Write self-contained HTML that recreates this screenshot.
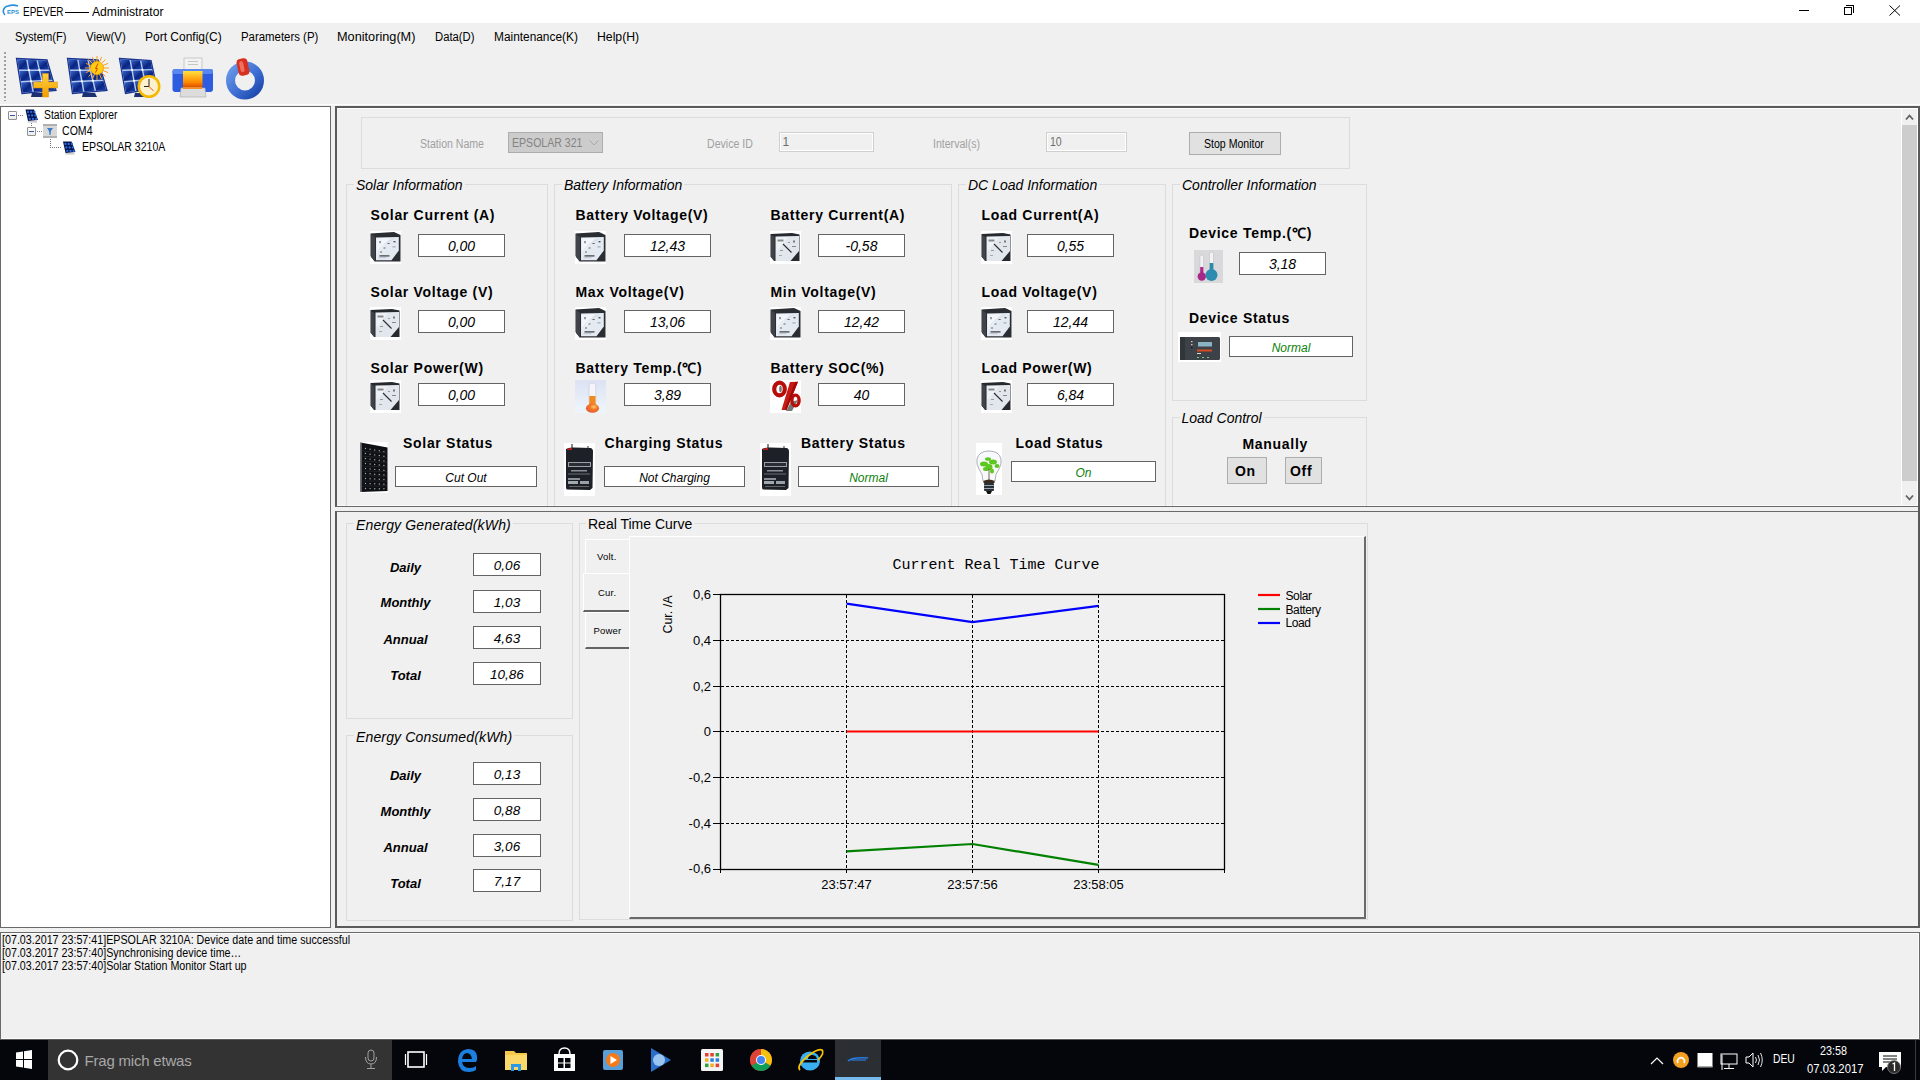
<!DOCTYPE html>
<html><head><meta charset="utf-8">
<style>
*{box-sizing:border-box;margin:0;padding:0}
html,body{width:1920px;height:1080px;overflow:hidden;background:#f0f0f0;font-family:"Liberation Sans",sans-serif;color:#000}
.a{position:absolute}
.t{position:absolute;white-space:nowrap;line-height:1}
.gb{position:absolute;border:1px solid #dcdcdc}
.vb{position:absolute;background:#fff;border:1px solid #646464;font-style:italic;font-size:13.4px;text-align:center;white-space:nowrap}
.lb{position:absolute;white-space:nowrap;line-height:1;font-weight:bold;font-size:14px;letter-spacing:0.7px}
.gt{position:absolute;white-space:nowrap;line-height:1;font-style:italic;font-size:14px;background:#f0f0f0;padding:0 2px}
</style></head><body>

<svg width="0" height="0" style="position:absolute">
<defs>
<symbol id="gA" viewBox="0 0 31 33">
<rect width="31" height="33" fill="#fff"/>
<polygon points="0.5,2.5 24,1 30.5,4 30.5,30.5 4.5,30.5 0.5,25" fill="#2a2d32"/>
<polygon points="1,3 5,6 5,30 1,26" fill="#40444a"/>
<polygon points="6,6.5 28.8,6 28.8,19.5 21.5,29.2 6,29.2" fill="#e4eaf2"/>
<polygon points="7,7.5 20,7 10,20 7,22" fill="#f2f5fa"/>
<rect x="9.5" y="24.3" width="10" height="1.2" fill="#3a3a3a"/>
<rect x="8.5" y="26.5" width="8" height="0.6" fill="#aab"/>
<rect x="9.5" y="10" width="1" height="2.2" fill="#444"/>
<rect x="17.5" y="12" width="2.2" height="1" fill="#666"/>
<rect x="23.5" y="10" width="2" height="1.4" fill="#555"/>
<rect x="13.5" y="16.5" width="2" height="1" fill="#666"/>
<rect x="10" y="20.5" width="2" height="1" fill="#666"/>
<rect x="22.5" y="15.5" width="3" height="0.8" fill="#888"/>
<path d="M8 21 Q12 12 24 8" stroke="#c8ccd4" stroke-width="0.5" fill="none"/>
</symbol>
<symbol id="gV" viewBox="0 0 31 33">
<rect width="31" height="33" fill="#fff"/>
<polygon points="0.5,3 22,2 29.5,3.5 29.5,30 4,30 0.5,25.5" fill="#26292d"/>
<polygon points="1,4 4.5,6 4.5,30 1,26" fill="#40444a"/>
<polygon points="5.5,5.5 29,5 29,20 20.5,30 5.5,30" fill="#e2e7ee"/>
<polygon points="6.5,6.5 18,6 9,18 6.5,20" fill="#eef2f7"/>
<line x1="13" y1="13" x2="21.5" y2="21.5" stroke="#2a2a2a" stroke-width="1.1"/>
<rect x="7.5" y="8.5" width="6" height="2" fill="#8a8a8a"/>
<rect x="23" y="9.5" width="2" height="2" fill="#777"/>
<rect x="22" y="15" width="4" height="1" fill="#888"/>
<rect x="10" y="19" width="3" height="1" fill="#999"/>
<rect x="18" y="11" width="2" height="1" fill="#999"/>
<rect x="9" y="24" width="3" height="1" fill="#aaa"/>
</symbol>
<symbol id="therm" viewBox="0 0 31 33">
<defs><linearGradient id="tbg" x1="0" y1="0" x2="0" y2="1"><stop offset="0" stop-color="#dce2f3"/><stop offset="1" stop-color="#eef6fc"/></linearGradient>
<radialGradient id="tbulb" cx="0.6" cy="0.35" r="0.7"><stop offset="0" stop-color="#ffd070"/><stop offset="0.4" stop-color="#f5782a"/><stop offset="1" stop-color="#e05a30"/></radialGradient></defs>
<rect width="31" height="33" fill="url(#tbg)"/>
<rect x="14" y="3" width="6.8" height="22" rx="3" fill="#f4f4fa" stroke="#c8c8d4" stroke-width="0.6"/>
<rect x="14.3" y="16" width="6.2" height="10" fill="#f08a20"/>
<ellipse cx="17.5" cy="28.2" rx="6.6" ry="4.6" fill="url(#tbulb)"/>
</symbol>
<symbol id="pct" viewBox="0 0 31 33">
<rect width="31" height="33" fill="#fff"/>
<path d="M21 22 L28 20 L22 31 L16 31 Z" fill="#555" opacity="0.8"/>
<ellipse cx="9.5" cy="9" rx="5.3" ry="6.3" fill="none" stroke="#b80e0a" stroke-width="4.2"/>
<ellipse cx="10.5" cy="9" rx="1.3" ry="3.2" fill="#777"/>
<ellipse cx="25.5" cy="20.5" rx="3.6" ry="5.4" fill="none" stroke="#b80e0a" stroke-width="3.4"/>
<polygon points="20,2 28,1.8 16.5,30 11.5,30" fill="#c81a14"/>
<polygon points="25,2 28,1.8 16.5,30 14.5,30" fill="#a00c08"/>
</symbol>
<symbol id="batt" viewBox="0 0 31 53">
<rect width="31" height="53" fill="#fff"/>
<rect x="7" y="1" width="2" height="5" fill="#8a8a8a"/>
<rect x="23" y="3" width="2" height="3" fill="#999"/>
<path d="M2 6 Q5 4 10 4.5 L27 5 Q29 6 29 8 L28.5 45 L26 47 L3 46.5 Q2 46 2 44 Z" fill="#1d2026"/>
<path d="M3 6 Q5 4.5 8 5 L8 7 L3 7Z" fill="#b02020"/>
<rect x="4" y="19" width="23" height="5" fill="#9aa0a8"/>
<rect x="5" y="20" width="21" height="3" fill="#2a2d33"/>
<rect x="7" y="27" width="16" height="1.5" fill="#8a9098"/>
<rect x="4" y="30.5" width="22" height="1" fill="#6a7078"/>
<rect x="4" y="35" width="12" height="2" fill="#8a9098"/>
<rect x="4" y="38" width="10" height="3" fill="#a0a8b0"/>
<rect x="16" y="38" width="9" height="3" fill="#9aa0a8"/>
<rect x="5" y="43" width="20" height="0.8" fill="#777"/>
</symbol>
<symbol id="panel" viewBox="0 0 28 51">
<rect width="28" height="51" fill="#fff"/>
<polygon points="0.5,0.5 27.5,5.5 27.5,49 0.5,50" fill="#0e1014"/>
<polygon points="0.5,0.5 2,1 2,50 0.5,50" fill="#5a5c60"/>
<g stroke="#3a3c42" stroke-width="0.4">
<line x1="1" y1="9" x2="27" y2="11"/><line x1="1" y1="14" x2="27" y2="16"/><line x1="1" y1="19" x2="27" y2="20.5"/><line x1="1" y1="24" x2="27" y2="25"/><line x1="1" y1="29" x2="27" y2="29.5"/><line x1="1" y1="34" x2="27" y2="34"/><line x1="1" y1="39" x2="27" y2="39"/><line x1="1" y1="44" x2="27" y2="44"/>
</g>
<circle cx="5.5" cy="6.5" r="0.7" fill="#a8aab0"/><circle cx="10.1" cy="7.3" r="0.7" fill="#a8aab0"/><circle cx="14.7" cy="8.0" r="0.7" fill="#a8aab0"/><circle cx="19.3" cy="8.8" r="0.7" fill="#a8aab0"/><circle cx="23.9" cy="9.6" r="0.7" fill="#a8aab0"/><circle cx="5.5" cy="11.5" r="0.7" fill="#a8aab0"/><circle cx="10.1" cy="12.2" r="0.7" fill="#a8aab0"/><circle cx="14.7" cy="12.9" r="0.7" fill="#a8aab0"/><circle cx="19.3" cy="13.5" r="0.7" fill="#a8aab0"/><circle cx="23.9" cy="14.2" r="0.7" fill="#a8aab0"/><circle cx="5.5" cy="16.5" r="0.7" fill="#a8aab0"/><circle cx="10.1" cy="17.1" r="0.7" fill="#a8aab0"/><circle cx="14.7" cy="17.7" r="0.7" fill="#a8aab0"/><circle cx="19.3" cy="18.3" r="0.7" fill="#a8aab0"/><circle cx="23.9" cy="18.9" r="0.7" fill="#a8aab0"/><circle cx="5.5" cy="21.5" r="0.7" fill="#a8aab0"/><circle cx="10.1" cy="22.0" r="0.7" fill="#a8aab0"/><circle cx="14.7" cy="22.5" r="0.7" fill="#a8aab0"/><circle cx="19.3" cy="23.0" r="0.7" fill="#a8aab0"/><circle cx="23.9" cy="23.5" r="0.7" fill="#a8aab0"/><circle cx="5.5" cy="26.5" r="0.7" fill="#a8aab0"/><circle cx="10.1" cy="26.9" r="0.7" fill="#a8aab0"/><circle cx="14.7" cy="27.4" r="0.7" fill="#a8aab0"/><circle cx="19.3" cy="27.8" r="0.7" fill="#a8aab0"/><circle cx="23.9" cy="28.2" r="0.7" fill="#a8aab0"/><circle cx="5.5" cy="31.5" r="0.7" fill="#a8aab0"/><circle cx="10.1" cy="31.8" r="0.7" fill="#a8aab0"/><circle cx="14.7" cy="32.2" r="0.7" fill="#a8aab0"/><circle cx="19.3" cy="32.5" r="0.7" fill="#a8aab0"/><circle cx="23.9" cy="32.9" r="0.7" fill="#a8aab0"/><circle cx="5.5" cy="36.5" r="0.7" fill="#a8aab0"/><circle cx="10.1" cy="36.8" r="0.7" fill="#a8aab0"/><circle cx="14.7" cy="37.0" r="0.7" fill="#a8aab0"/><circle cx="19.3" cy="37.3" r="0.7" fill="#a8aab0"/><circle cx="23.9" cy="37.5" r="0.7" fill="#a8aab0"/><circle cx="5.5" cy="41.5" r="0.7" fill="#a8aab0"/><circle cx="10.1" cy="41.7" r="0.7" fill="#a8aab0"/><circle cx="14.7" cy="41.8" r="0.7" fill="#a8aab0"/><circle cx="19.3" cy="42.0" r="0.7" fill="#a8aab0"/><circle cx="23.9" cy="42.2" r="0.7" fill="#a8aab0"/><circle cx="5.5" cy="46.5" r="0.7" fill="#a8aab0"/><circle cx="10.1" cy="46.6" r="0.7" fill="#a8aab0"/><circle cx="14.7" cy="46.7" r="0.7" fill="#a8aab0"/><circle cx="19.3" cy="46.8" r="0.7" fill="#a8aab0"/><circle cx="23.9" cy="46.8" r="0.7" fill="#a8aab0"/>
</symbol>
<symbol id="bulb" viewBox="0 0 26 52">
<rect width="26" height="52" fill="#fff"/>
<path d="M7 38 Q7 31 3 26 Q0 21 1 16 Q3 8 13 8 Q23 8 25 16 Q26 21 23 26 Q19 31 19 38 Z" fill="#f8f9fc" stroke="#8c8c98" stroke-width="0.7"/>
<g fill="#5cc81e">
<ellipse cx="8" cy="21" rx="4" ry="2.5"/><ellipse cx="17" cy="19" rx="4" ry="2.5"/><ellipse cx="13" cy="24" rx="3.5" ry="3"/><ellipse cx="21" cy="23" rx="2.5" ry="2"/><ellipse cx="10" cy="26" rx="3" ry="2"/><ellipse cx="16" cy="28" rx="2" ry="2.5"/><ellipse cx="12" cy="16" rx="3" ry="1.8"/>
</g>
<line x1="13" y1="26" x2="13" y2="37" stroke="#5a4020" stroke-width="0.8"/>
<path d="M7.5 38 Q13 35 18.5 38 L18.5 40 L7.5 40Z" fill="#3a2a1a"/>
<rect x="8" y="40" width="10" height="8" rx="1" fill="#2a3038"/>
<rect x="8" y="42" width="10" height="1" fill="#9aa4b0"/>
<rect x="8" y="45" width="10" height="1" fill="#9aa4b0"/>
<path d="M10 48 L16 48 L14.5 51 L11.5 51Z" fill="#111"/>
</symbol>
<symbol id="dtemp" viewBox="0 0 29 33">
<rect width="29" height="33" fill="#d9d9dc"/>
<rect x="6" y="5" width="3.5" height="20" rx="1.7" fill="#f2f2f4" stroke="#b8b8c0" stroke-width="0.5"/>
<rect x="6.2" y="17" width="3.1" height="8" fill="#b0268c"/>
<circle cx="7.8" cy="26.5" r="4.2" fill="#a8288a"/>
<rect x="15.5" y="2" width="4" height="20" rx="2" fill="#f2f2f4" stroke="#b8b8c0" stroke-width="0.5"/>
<rect x="15.7" y="13" width="3.6" height="10" fill="#2a8aa8"/>
<circle cx="17.5" cy="25" r="6" fill="#2e8cb0"/>
</symbol>
<symbol id="ctrl" viewBox="0 0 43 30">
<rect width="43" height="30" fill="#fff"/>
<rect x="2" y="5" width="40" height="23" rx="1.5" fill="#3c4248"/>
<rect x="2" y="5" width="5" height="23" fill="#30353a"/>
<rect x="20" y="10" width="14" height="4.5" fill="#8ab4c4"/>
<rect x="19" y="17.5" width="15" height="2" fill="#d84a20"/>
<rect x="13" y="9" width="1.5" height="1.2" fill="#ccc"/><rect x="13" y="12" width="1.5" height="1.2" fill="#ccc"/><rect x="13" y="15" width="1.5" height="1.2" fill="#111"/>
<rect x="19" y="21" width="4" height="1" fill="#ddd"/>
<rect x="19" y="25" width="2" height="1" fill="#7c7"/><rect x="24" y="25" width="2" height="1" fill="#7c7"/><rect x="29" y="25" width="2" height="1" fill="#7c7"/>
</symbol>
</defs></svg>

<!-- TITLE BAR -->
<div class="a" style="left:0;top:0;width:1920px;height:23px;background:#fff"></div>
<svg class="a" style="left:2px;top:4px" width="17" height="14" viewBox="0 0 17 14">
<path d="M3 11 C0 8 1 3 6 2 C9 1 13 1 16 2" stroke="#2a8fd8" stroke-width="1.6" fill="none"/>
<text x="5" y="10" font-size="6" font-weight="bold" fill="#2a8fd8" font-family="Liberation Sans">EPS</text>
</svg>
<div class="t" style="left:23px;top:6px;font-size:12.5px;transform:scaleX(.8);transform-origin:0 0">EPEVER</div><div class="a" style="left:65px;top:12px;width:24px;height:1px;background:#000"></div><div class="t" style="left:92px;top:6px;font-size:12.5px;transform:scaleX(.97);transform-origin:0 0">Administrator</div>
<div class="a" style="left:1799px;top:10px;width:10px;height:1px;background:#000"></div>
<div class="a" style="left:1844px;top:7px;width:8px;height:8px;border:1px solid #000"></div>
<div class="a" style="left:1846px;top:5px;width:8px;height:8px;border-top:1px solid #000;border-right:1px solid #000"></div>
<svg class="a" style="left:1889px;top:5px" width="12" height="11"><path d="M0.5 0.5 L11 10.5 M11 0.5 L0.5 10.5" stroke="#000" stroke-width="1"/></svg>

<!-- MENU -->
<div class="t" style="left:15px;top:31px;font-size:12px;transform:scaleX(0.93);transform-origin:0 0">System(F)</div>
<div class="t" style="left:86px;top:31px;font-size:12px;transform:scaleX(0.95);transform-origin:0 0">View(V)</div>
<div class="t" style="left:145px;top:31px;font-size:12px;transform:scaleX(1.0);transform-origin:0 0">Port Config(C)</div>
<div class="t" style="left:241px;top:31px;font-size:12px;transform:scaleX(0.95);transform-origin:0 0">Parameters (P)</div>
<div class="t" style="left:337px;top:31px;font-size:12px;transform:scaleX(1.06);transform-origin:0 0">Monitoring(M)</div>
<div class="t" style="left:435px;top:31px;font-size:12px;transform:scaleX(0.94);transform-origin:0 0">Data(D)</div>
<div class="t" style="left:494px;top:31px;font-size:12px;transform:scaleX(0.99);transform-origin:0 0">Maintenance(K)</div>
<div class="t" style="left:597px;top:31px;font-size:12px;transform:scaleX(1.02);transform-origin:0 0">Help(H)</div>

<!-- TOOLBAR -->
<div class="a" style="left:4px;top:52px;width:2px;height:49px;background:repeating-linear-gradient(#a0a0a0 0 2px,transparent 2px 4px)"></div>
<div class="a" style="left:0;top:104px;width:1920px;height:1px;background:#fcfcfc"></div>

<!-- TREE PANEL -->
<div class="a" style="left:0;top:106px;width:331px;height:822px;background:#fff;border:1px solid #696969"></div>

<!-- TOP MAIN PANEL -->
<div class="a" style="left:335px;top:106px;width:1585px;height:401px;border-top:2px solid #5a5a5a;border-left:2px solid #5a5a5a;border-bottom:1px solid #6a6a6a;border-right:2px solid #5a5a5a"></div>
<!-- scrollbar -->
<div class="a" style="left:337px;top:108px;width:1581px;height:1px;background:#fff"></div>
<div class="a" style="left:1901px;top:108px;width:1px;height:398px;background:#fff"></div>
<div class="a" style="left:1917px;top:108px;width:1px;height:398px;background:#fff"></div>
<div class="a" style="left:337px;top:505px;width:1581px;height:1px;background:#fafafa"></div>
<div class="a" style="left:1902px;top:125px;width:15px;height:356px;background:#cdcdcd"></div>
<svg class="a" style="left:1905px;top:113px" width="9" height="8"><path d="M1 6.5 L4.5 2.5 L8 6.5" stroke="#606060" stroke-width="1.8" fill="none"/></svg>
<svg class="a" style="left:1905px;top:494px" width="9" height="8"><path d="M1 1.5 L4.5 5.5 L8 1.5" stroke="#606060" stroke-width="1.8" fill="none"/></svg>

<!-- LOWER PANEL -->
<div class="a" style="left:335px;top:511px;width:1585px;height:417px;border-top:1px solid #6a6a6a;border-left:2px solid #5a5a5a;border-bottom:2px solid #5a5a5a;border-right:2px solid #5a5a5a"></div>

<!-- LOG -->
<div class="a" style="left:0;top:932px;width:1920px;height:108px;border-top:1px solid #6a6a6a;border-left:1px solid #6a6a6a;border-right:1px solid #6a6a6a;border-bottom:1px solid #5a5a5a"></div>
<div class="a" style="left:1px;top:933px;width:1918px;height:1px;background:#fafafa"></div>
<div class="a" style="left:1px;top:1038px;width:1918px;height:1px;background:#fafafa"></div>
<div class="a" style="left:1918px;top:933px;width:1px;height:106px;background:#fafafa"></div>
<div class="a" style="left:1918px;top:506px;width:2px;height:6px;background:#5a5a5a"></div>
<div class="t" style="left:2px;top:934px;font-size:12px;line-height:13px;transform:scaleX(.892);transform-origin:0 0">[07.03.2017 23:57:41]EPSOLAR 3210A: Device date and time successful<br>[07.03.2017 23:57:40]Synchronising device time…<br>[07.03.2017 23:57:40]Solar Station Monitor Start up</div>

<!-- TASKBAR -->
<div class="a" style="left:0;top:1040px;width:1920px;height:40px;background:#04060b"></div>
<div class="a" style="left:48px;top:1040px;width:344px;height:40px;background:#333"></div>

<div class="a" style="left:0;top:0;width:1920px;height:1080px;clip-path:inset(108px 19px 574px 337px)">
<div class="gb" style="left:361px;top:117px;width:989px;height:52px"></div>
<div class="t" style="left:420px;top:137.84px;font-size:12px;transform:scaleX(.88);transform-origin:0 0;color:#a0a0a0">Station Name</div>
<div class="a" style="left:508px;top:132px;width:95px;height:21px;background:#cccccc;border:1px solid #adadad"></div>
<div class="t" style="left:512px;top:137.34px;font-size:12px;transform:scaleX(.88);transform-origin:0 0;color:#838383">EPSOLAR 321</div>
<svg class="a" style="left:589px;top:140px" width="10" height="6"><path d="M0.5 0.5 L5 5 L9.5 0.5" stroke="#a8a8a8" fill="none"/></svg>
<div class="t" style="left:707px;top:137.84px;font-size:12px;transform:scaleX(.88);transform-origin:0 0;color:#a0a0a0">Device ID</div>
<div class="a" style="left:779px;top:132px;width:95px;height:20px;background:#f0f0f0;border:1px solid #cfcfcf;box-shadow:inset 0 0 0 1px #fff"></div>
<div class="t" style="left:782.5px;top:136.34px;font-size:12px;color:#6d6d6d">1</div>
<div class="t" style="left:933px;top:137.84px;font-size:12px;transform:scaleX(.88);transform-origin:0 0;color:#a0a0a0">Interval(s)</div>
<div class="a" style="left:1046px;top:132px;width:81px;height:20px;background:#f0f0f0;border:1px solid #cfcfcf;box-shadow:inset 0 0 0 1px #fff"></div>
<div class="t" style="left:1049.5px;top:136.34px;font-size:12px;transform:scaleX(.88);transform-origin:0 0;color:#6d6d6d">10</div>
<div class="a" style="left:1189px;top:132px;width:92px;height:23px;background:#e1e1e1;border:1px solid #adadad"></div>
<div class="t" style="left:1204px;top:137.84px;font-size:12px;transform:scaleX(.88);transform-origin:0 0;">Stop Monitor</div>
<div class="gb" style="left:346px;top:184px;width:202px;height:340px"></div>
<div class="gt" style="left:354px;top:177.85px;font-size:14px;">Solar Information</div>
<div class="gb" style="left:554px;top:184px;width:398px;height:340px"></div>
<div class="gt" style="left:562px;top:177.85px;font-size:14px;">Battery Information</div>
<div class="gb" style="left:958px;top:184px;width:208px;height:340px"></div>
<div class="gt" style="left:966px;top:177.85px;font-size:14px;">DC Load Information</div>
<div class="gb" style="left:1172px;top:184px;width:195px;height:217px"></div>
<div class="gt" style="left:1180px;top:177.85px;font-size:14px;">Controller Information</div>
<div class="gb" style="left:1172px;top:417px;width:195px;height:120px"></div>
<div class="gt" style="left:1179.5px;top:411.15px;font-size:14px;">Load Control</div>
<div class="lb" style="left:370.5px;top:208.15px;font-size:14px;">Solar Current (A)</div>
<svg class="a" style="left:370px;top:231px" width="31" height="33"><use href="#gA"/></svg>
<div class="vb" style="left:418px;top:234px;width:87px;height:23px;line-height:21px;padding-top:0.5px;font-size:14px;color:#000">0,00</div>
<div class="lb" style="left:370.5px;top:284.65px;font-size:14px;">Solar Voltage (V)</div>
<svg class="a" style="left:370px;top:307px" width="31" height="33"><use href="#gV"/></svg>
<div class="vb" style="left:418px;top:310px;width:87px;height:23px;line-height:21px;padding-top:0.5px;font-size:14px;color:#000">0,00</div>
<div class="lb" style="left:370.5px;top:360.65px;font-size:14px;">Solar Power(W)</div>
<svg class="a" style="left:370px;top:380px" width="31" height="33"><use href="#gV"/></svg>
<div class="vb" style="left:418px;top:383px;width:87px;height:23px;line-height:21px;padding-top:0.5px;font-size:14px;color:#000">0,00</div>
<div class="lb" style="left:575.5px;top:208.15px;font-size:14px;">Battery Voltage(V)</div>
<svg class="a" style="left:575px;top:231px" width="31" height="33"><use href="#gA"/></svg>
<div class="vb" style="left:624px;top:234px;width:87px;height:23px;line-height:21px;padding-top:0.5px;font-size:14px;color:#000">12,43</div>
<div class="lb" style="left:575.5px;top:284.65px;font-size:14px;">Max Voltage(V)</div>
<svg class="a" style="left:575px;top:307px" width="31" height="33"><use href="#gA"/></svg>
<div class="vb" style="left:624px;top:310px;width:87px;height:23px;line-height:21px;padding-top:0.5px;font-size:14px;color:#000">13,06</div>
<div class="lb" style="left:575.5px;top:360.65px;font-size:14px;">Battery Temp.(&#8451;)</div>
<svg class="a" style="left:575px;top:380px" width="31" height="33"><use href="#therm"/></svg>
<div class="vb" style="left:624px;top:383px;width:87px;height:23px;line-height:21px;padding-top:0.5px;font-size:14px;color:#000">3,89</div>
<div class="lb" style="left:770.5px;top:208.15px;font-size:14px;">Battery Current(A)</div>
<svg class="a" style="left:770px;top:231px" width="31" height="33"><use href="#gV"/></svg>
<div class="vb" style="left:818px;top:234px;width:87px;height:23px;line-height:21px;padding-top:0.5px;font-size:14px;color:#000">-0,58</div>
<div class="lb" style="left:770.5px;top:284.65px;font-size:14px;">Min Voltage(V)</div>
<svg class="a" style="left:770px;top:307px" width="31" height="33"><use href="#gA"/></svg>
<div class="vb" style="left:818px;top:310px;width:87px;height:23px;line-height:21px;padding-top:0.5px;font-size:14px;color:#000">12,42</div>
<div class="lb" style="left:770.5px;top:360.65px;font-size:14px;">Battery SOC(%)</div>
<svg class="a" style="left:770px;top:380px" width="31" height="33"><use href="#pct"/></svg>
<div class="vb" style="left:818px;top:383px;width:87px;height:23px;line-height:21px;padding-top:0.5px;font-size:14px;color:#000">40</div>
<div class="lb" style="left:981.5px;top:208.15px;font-size:14px;">Load Current(A)</div>
<svg class="a" style="left:981px;top:231px" width="31" height="33"><use href="#gV"/></svg>
<div class="vb" style="left:1027px;top:234px;width:87px;height:23px;line-height:21px;padding-top:0.5px;font-size:14px;color:#000">0,55</div>
<div class="lb" style="left:981.5px;top:284.65px;font-size:14px;">Load Voltage(V)</div>
<svg class="a" style="left:981px;top:307px" width="31" height="33"><use href="#gA"/></svg>
<div class="vb" style="left:1027px;top:310px;width:87px;height:23px;line-height:21px;padding-top:0.5px;font-size:14px;color:#000">12,44</div>
<div class="lb" style="left:981.5px;top:360.65px;font-size:14px;">Load Power(W)</div>
<svg class="a" style="left:981px;top:380px" width="31" height="33"><use href="#gV"/></svg>
<div class="vb" style="left:1027px;top:383px;width:87px;height:23px;line-height:21px;padding-top:0.5px;font-size:14px;color:#000">6,84</div>
<svg class="a" style="left:360px;top:442px" width="28" height="51"><use href="#panel"/></svg>
<div class="lb" style="left:403px;top:436.15px;font-size:14px;">Solar Status</div>
<div class="vb" style="left:395px;top:466px;width:142px;height:21px;line-height:19px;padding-top:2px;font-size:12px;color:#000">Cut Out</div>
<svg class="a" style="left:564px;top:443px" width="31" height="53"><use href="#batt"/></svg>
<div class="lb" style="left:604.5px;top:436.15px;font-size:14px;">Charging Status</div>
<div class="vb" style="left:604px;top:466px;width:141px;height:21px;line-height:19px;padding-top:2px;font-size:12px;color:#000">Not Charging</div>
<svg class="a" style="left:760px;top:443px" width="31" height="53"><use href="#batt"/></svg>
<div class="lb" style="left:801px;top:436.15px;font-size:14px;">Battery Status</div>
<div class="vb" style="left:798px;top:466px;width:141px;height:21px;line-height:19px;padding-top:2px;font-size:12px;color:#0a820a">Normal</div>
<svg class="a" style="left:976px;top:443px" width="26" height="52"><use href="#bulb"/></svg>
<div class="lb" style="left:1015.5px;top:436.15px;font-size:14px;">Load Status</div>
<div class="vb" style="left:1011px;top:461px;width:145px;height:21px;line-height:19px;padding-top:2px;font-size:12px;color:#0a820a">On</div>
<div class="lb" style="left:1189px;top:225.85px;font-size:14px;">Device Temp.(&#8451;)</div>
<svg class="a" style="left:1194px;top:250px" width="29" height="33"><use href="#dtemp"/></svg>
<div class="vb" style="left:1239px;top:252px;width:87px;height:23px;line-height:21px;padding-top:0.5px;font-size:14px;color:#000">3,18</div>
<div class="lb" style="left:1189px;top:310.95px;font-size:14px;">Device Status</div>
<svg class="a" style="left:1178px;top:332px" width="43" height="30"><use href="#ctrl"/></svg>
<div class="vb" style="left:1229px;top:336px;width:124px;height:21px;line-height:19px;padding-top:2px;font-size:12px;color:#0a820a">Normal</div>
<div class="lb" style="left:1242.5px;top:436.85px;font-size:14px;">Manually</div>
<div class="a" style="left:1227px;top:457px;width:40px;height:27px;background:#e1e1e1;border:1px solid #adadad"></div>
<div class="lb" style="left:1235px;top:464.15px;font-size:14px;">On</div>
<div class="a" style="left:1285px;top:457px;width:37px;height:27px;background:#e1e1e1;border:1px solid #adadad"></div>
<div class="lb" style="left:1290px;top:464.15px;font-size:14px;">Off</div>
</div>
<div class="a" style="left:0;top:0;width:1920px;height:1080px;clip-path:inset(512px 2px 153px 337px)">
<div class="gb" style="left:346px;top:523px;width:227px;height:196px"></div>
<div class="gt" style="left:354px;top:517.65px;font-size:14px;letter-spacing:0.15px">Energy Generated(kWh)</div>
<div class="gb" style="left:346px;top:735px;width:227px;height:186px"></div>
<div class="gt" style="left:354px;top:729.65px;font-size:14px;letter-spacing:0.15px">Energy Consumed(kWh)</div>
<div class="t" style="left:355px;width:101px;text-align:center;top:560.90px;font-size:13px;font-weight:bold;font-style:italic">Daily</div>
<div class="vb" style="left:473px;top:553px;width:68px;height:23px;line-height:21px;padding-top:1px;font-size:13.5px;color:#000">0,06</div>
<div class="t" style="left:355px;width:101px;text-align:center;top:769.30px;font-size:13px;font-weight:bold;font-style:italic">Daily</div>
<div class="vb" style="left:473px;top:762px;width:68px;height:23px;line-height:21px;padding-top:1px;font-size:13.5px;color:#000">0,13</div>
<div class="t" style="left:355px;width:101px;text-align:center;top:595.80px;font-size:13px;font-weight:bold;font-style:italic">Monthly</div>
<div class="vb" style="left:473px;top:590px;width:68px;height:23px;line-height:21px;padding-top:1px;font-size:13.5px;color:#000">1,03</div>
<div class="t" style="left:355px;width:101px;text-align:center;top:805.00px;font-size:13px;font-weight:bold;font-style:italic">Monthly</div>
<div class="vb" style="left:473px;top:798px;width:68px;height:23px;line-height:21px;padding-top:1px;font-size:13.5px;color:#000">0,88</div>
<div class="t" style="left:355px;width:101px;text-align:center;top:632.70px;font-size:13px;font-weight:bold;font-style:italic">Annual</div>
<div class="vb" style="left:473px;top:626px;width:68px;height:23px;line-height:21px;padding-top:1px;font-size:13.5px;color:#000">4,63</div>
<div class="t" style="left:355px;width:101px;text-align:center;top:841.00px;font-size:13px;font-weight:bold;font-style:italic">Annual</div>
<div class="vb" style="left:473px;top:834px;width:68px;height:23px;line-height:21px;padding-top:1px;font-size:13.5px;color:#000">3,06</div>
<div class="t" style="left:355px;width:101px;text-align:center;top:668.80px;font-size:13px;font-weight:bold;font-style:italic">Total</div>
<div class="vb" style="left:473px;top:662px;width:68px;height:23px;line-height:21px;padding-top:1px;font-size:13.5px;color:#000">10,86</div>
<div class="t" style="left:355px;width:101px;text-align:center;top:876.70px;font-size:13px;font-weight:bold;font-style:italic">Total</div>
<div class="vb" style="left:473px;top:869px;width:68px;height:23px;line-height:21px;padding-top:1px;font-size:13.5px;color:#000">7,17</div>
<div class="gb" style="left:579px;top:523px;width:789px;height:397px"></div>
<div class="t" style="left:586px;top:516.95px;font-size:14px;background:#f0f0f0;padding:0 2px">Real Time Curve</div>
<div class="a" style="left:585px;top:539px;width:45px;height:35px;border-top:1px solid #fff;border-left:1px solid #fff"></div>
<div class="a" style="left:583px;top:573px;width:47px;height:39px;border-top:1px solid #fff;border-left:1px solid #fff;border-bottom:2px solid #646464"></div>
<div class="a" style="left:585px;top:612px;width:45px;height:37px;border-top:1px solid #fff;border-left:1px solid #fff;border-bottom:2px solid #646464"></div>
<div class="t" style="left:597px;top:552.46px;font-size:9.5px;letter-spacing:0.2px">Volt.</div>
<div class="t" style="left:598px;top:588.46px;font-size:9.5px;letter-spacing:0.2px">Cur.</div>
<div class="t" style="left:593.5px;top:626.46px;font-size:9.5px;letter-spacing:0.2px">Power</div>
<div class="a" style="left:629px;top:536px;width:737px;height:383px;border-left:1px solid #fff;border-top:1px solid #fff;border-right:2px solid #6a6a6a;border-bottom:2px solid #6a6a6a"></div>
<div class="t" style="left:892.5px;top:558.30px;font-size:15px;font-family:'Liberation Mono'">Current Real Time Curve</div>
<svg class="a" style="left:0;top:0" width="1920" height="1080"><line x1="713" y1="594.5" x2="721" y2="594.5" stroke="#000" stroke-width="1"/><line x1="721" y1="640.5" x2="1224" y2="640.5" stroke="#000" stroke-width="1" stroke-dasharray="3,2"/><line x1="713" y1="640.5" x2="721" y2="640.5" stroke="#000" stroke-width="1"/><line x1="721" y1="686.5" x2="1224" y2="686.5" stroke="#000" stroke-width="1" stroke-dasharray="3,2"/><line x1="713" y1="686.5" x2="721" y2="686.5" stroke="#000" stroke-width="1"/><line x1="721" y1="731.5" x2="1224" y2="731.5" stroke="#000" stroke-width="1" stroke-dasharray="3,2"/><line x1="713" y1="731.5" x2="721" y2="731.5" stroke="#000" stroke-width="1"/><line x1="721" y1="777.5" x2="1224" y2="777.5" stroke="#000" stroke-width="1" stroke-dasharray="3,2"/><line x1="713" y1="777.5" x2="721" y2="777.5" stroke="#000" stroke-width="1"/><line x1="721" y1="823.5" x2="1224" y2="823.5" stroke="#000" stroke-width="1" stroke-dasharray="3,2"/><line x1="713" y1="823.5" x2="721" y2="823.5" stroke="#000" stroke-width="1"/><line x1="713" y1="869.5" x2="721" y2="869.5" stroke="#000" stroke-width="1"/><line x1="846.5" y1="595" x2="846.5" y2="869" stroke="#000" stroke-width="1" stroke-dasharray="3,2"/><line x1="846.5" y1="869" x2="846.5" y2="873" stroke="#000" stroke-width="1"/><line x1="972.5" y1="595" x2="972.5" y2="869" stroke="#000" stroke-width="1" stroke-dasharray="3,2"/><line x1="972.5" y1="869" x2="972.5" y2="873" stroke="#000" stroke-width="1"/><line x1="1098.5" y1="595" x2="1098.5" y2="869" stroke="#000" stroke-width="1" stroke-dasharray="3,2"/><line x1="1098.5" y1="869" x2="1098.5" y2="873" stroke="#000" stroke-width="1"/><line x1="720.5" y1="869" x2="720.5" y2="873" stroke="#000" stroke-width="1"/><line x1="1224.5" y1="869" x2="1224.5" y2="873" stroke="#000" stroke-width="1"/><rect x="720.5" y="594.5" width="504" height="275" fill="none" stroke="#000" stroke-width="1.3"/><polyline points="846.5,731.5 972.5,731.5 1098.5,731.5" fill="none" stroke="#ff0000" stroke-width="2.2"/><polyline points="846.5,603.6 972.5,622.2 1098.5,605.9" fill="none" stroke="#0000ff" stroke-width="2.2"/><polyline points="846.5,851.4 972.5,844.0 1098.5,864.9" fill="none" stroke="#008000" stroke-width="2.2"/><line x1="1258" y1="595" x2="1280" y2="595" stroke="#ff0000" stroke-width="2.2"/><line x1="1258" y1="609" x2="1280" y2="609" stroke="#008000" stroke-width="2.2"/><line x1="1258" y1="623" x2="1280" y2="623" stroke="#0000ff" stroke-width="2.2"/></svg>
<div class="t" style="left:660px;width:51px;text-align:right;top:587.90px;font-size:13px">0,6</div>
<div class="t" style="left:660px;width:51px;text-align:right;top:633.90px;font-size:13px">0,4</div>
<div class="t" style="left:660px;width:51px;text-align:right;top:679.90px;font-size:13px">0,2</div>
<div class="t" style="left:660px;width:51px;text-align:right;top:724.90px;font-size:13px">0</div>
<div class="t" style="left:660px;width:51px;text-align:right;top:770.90px;font-size:13px">-0,2</div>
<div class="t" style="left:660px;width:51px;text-align:right;top:816.90px;font-size:13px">-0,4</div>
<div class="t" style="left:660px;width:51px;text-align:right;top:861.70px;font-size:13px">-0,6</div>
<div class="t" style="left:816.5px;width:60px;text-align:center;top:877.75px;font-size:13px">23:57:47</div>
<div class="t" style="left:942.5px;width:60px;text-align:center;top:877.75px;font-size:13px">23:57:56</div>
<div class="t" style="left:1068.5px;width:60px;text-align:center;top:877.75px;font-size:13px">23:58:05</div>
<div class="t" style="left:647.5px;top:607.5px;width:40px;height:13px;text-align:center;font-size:12.5px;transform:rotate(-90deg)">Cur. /A</div>
<div class="t" style="left:1285.5px;top:589.64px;font-size:12px;letter-spacing:-0.4px">Solar</div>
<div class="t" style="left:1285.5px;top:603.54px;font-size:12px;letter-spacing:-0.4px">Battery</div>
<div class="t" style="left:1285.5px;top:617.44px;font-size:12px;letter-spacing:-0.4px">Load</div>
</div>
<svg class="a" style="left:0;top:0" width="300" height="110"><defs><linearGradient id="cellg" x1="0" y1="0" x2="1" y2="1"><stop offset="0" stop-color="#3a6ad0"/><stop offset="0.55" stop-color="#0a2480"/><stop offset="1" stop-color="#1a46b0"/></linearGradient><linearGradient id="plusg" x1="0" y1="0" x2="0" y2="1"><stop offset="0" stop-color="#ffd040"/><stop offset="1" stop-color="#f0a000"/></linearGradient><linearGradient id="ringg" x1="0" y1="0" x2="1" y2="1"><stop offset="0" stop-color="#6a9ae8"/><stop offset="0.6" stop-color="#3a6ad0"/><stop offset="1" stop-color="#1a44a8"/></linearGradient><linearGradient id="prg" x1="0" y1="0" x2="0" y2="1"><stop offset="0" stop-color="#ffe040"/><stop offset="0.7" stop-color="#ff8a00"/><stop offset="1" stop-color="#e05000"/></linearGradient></defs><polygon points="16.5,58.5 47,60 56,90.5 22,93.5" fill="#b4c8ee" stroke="#1a3490" stroke-width="1.3"/><polygon points="17.3,59.3 26.1,59.7 28.0,69.4 18.9,69.4" fill="url(#cellg)"/><polygon points="19.2,71.0 28.3,70.9 30.2,80.6 20.8,81.0" fill="url(#cellg)"/><polygon points="21.0,82.6 30.5,82.1 32.4,91.8 22.6,92.6" fill="url(#cellg)"/><polygon points="27.5,59.8 36.3,60.2 38.6,69.4 29.4,69.4" fill="url(#cellg)"/><polygon points="29.8,70.9 38.9,70.9 41.1,80.1 31.7,80.5" fill="url(#cellg)"/><polygon points="32.0,82.1 41.5,81.6 43.7,90.8 33.9,91.7" fill="url(#cellg)"/><polygon points="37.7,60.3 46.5,60.7 49.1,69.5 40.0,69.4" fill="url(#cellg)"/><polygon points="40.3,70.9 49.5,70.9 52.1,79.7 42.6,80.1" fill="url(#cellg)"/><polygon points="43.0,81.5 52.5,81.1 55.0,89.9 45.3,90.7" fill="url(#cellg)"/><circle cx="28.9" cy="70.2" r="1.1" fill="#fff"/><circle cx="31.1" cy="81.3" r="1.1" fill="#fff"/><circle cx="39.4" cy="70.2" r="1.1" fill="#fff"/><circle cx="42.1" cy="80.8" r="1.1" fill="#fff"/><polygon points="32,93 46,93 48,97 31,97" fill="#1a3070"/><path d="M42.5 73.5 h6 v8.5 h9 v6 h-9 v9 h-6 v-9 h-9 v-6 h9 z" fill="url(#plusg)" stroke="#e09000" stroke-width="0.5"/><polygon points="67.5,58.5 98,60 107,90.5 72.5,93.5" fill="#b4c8ee" stroke="#1a3490" stroke-width="1.3"/><polygon points="68.3,59.3 77.1,59.7 78.9,69.4 69.8,69.4" fill="url(#cellg)"/><polygon points="70.0,71.0 79.2,70.9 81.0,80.6 71.5,81.0" fill="url(#cellg)"/><polygon points="71.7,82.6 81.3,82.1 83.1,91.8 73.2,92.6" fill="url(#cellg)"/><polygon points="78.5,59.8 87.3,60.2 89.5,69.4 80.3,69.4" fill="url(#cellg)"/><polygon points="80.6,70.9 89.8,70.9 92.0,80.1 82.5,80.5" fill="url(#cellg)"/><polygon points="82.8,82.1 92.4,81.6 94.6,90.8 84.6,91.7" fill="url(#cellg)"/><polygon points="88.7,60.3 97.5,60.7 100.1,69.5 90.9,69.4" fill="url(#cellg)"/><polygon points="91.3,70.9 100.5,70.9 103.1,79.7 93.5,80.1" fill="url(#cellg)"/><polygon points="93.9,81.5 103.5,81.1 106.0,89.9 96.1,90.7" fill="url(#cellg)"/><circle cx="79.8" cy="70.2" r="1.1" fill="#fff"/><circle cx="81.9" cy="81.3" r="1.1" fill="#fff"/><circle cx="90.4" cy="70.2" r="1.1" fill="#fff"/><circle cx="92.9" cy="80.8" r="1.1" fill="#fff"/><polygon points="83,93 95,93 97,97 82,97" fill="#1a3070"/><g stroke="#f8a020" stroke-width="1"><line x1="97" y1="68" x2="109.0" y2="68.0"/><line x1="97" y1="68" x2="108.1" y2="72.6"/><line x1="97" y1="68" x2="105.5" y2="76.5"/><line x1="97" y1="68" x2="101.6" y2="79.1"/><line x1="97" y1="68" x2="97.0" y2="80.0"/><line x1="97" y1="68" x2="92.4" y2="79.1"/><line x1="97" y1="68" x2="88.5" y2="76.5"/><line x1="97" y1="68" x2="85.9" y2="72.6"/><line x1="97" y1="68" x2="85.0" y2="68.0"/><line x1="97" y1="68" x2="85.9" y2="63.4"/><line x1="97" y1="68" x2="88.5" y2="59.5"/><line x1="97" y1="68" x2="92.4" y2="56.9"/><line x1="97" y1="68" x2="97.0" y2="56.0"/><line x1="97" y1="68" x2="101.6" y2="56.9"/><line x1="97" y1="68" x2="105.5" y2="59.5"/><line x1="97" y1="68" x2="108.1" y2="63.4"/></g><circle cx="97" cy="68" r="6.5" fill="#ffcc10" stroke="#f0a010" stroke-width="0.8"/><path d="M98 63.5 L95.5 68.5 L97.5 68.5 L95.5 72.5" stroke="#e04010" stroke-width="1" fill="none"/><polygon points="119.5,58.5 151,60.5 157,88 125.5,93.5" fill="#b4c8ee" stroke="#1a3490" stroke-width="1.3"/><polygon points="120.3,59.3 129.4,59.9 131.2,69.3 122.1,69.4" fill="url(#cellg)"/><polygon points="122.3,70.9 131.4,70.7 133.2,80.2 124.1,81.0" fill="url(#cellg)"/><polygon points="124.3,82.5 133.4,81.6 135.2,91.1 126.1,92.6" fill="url(#cellg)"/><polygon points="130.8,59.9 139.9,60.5 141.7,69.2 132.6,69.3" fill="url(#cellg)"/><polygon points="132.8,70.7 141.9,70.5 143.7,79.2 134.6,80.0" fill="url(#cellg)"/><polygon points="134.8,81.5 143.9,80.6 145.7,89.3 136.6,90.8" fill="url(#cellg)"/><polygon points="141.3,60.5 150.4,61.1 152.2,69.1 143.1,69.2" fill="url(#cellg)"/><polygon points="143.3,70.5 152.4,70.3 154.2,78.3 145.1,79.1" fill="url(#cellg)"/><polygon points="145.3,80.4 154.4,79.5 156.2,87.5 147.1,89.0" fill="url(#cellg)"/><circle cx="132.0" cy="70.0" r="1.1" fill="#fff"/><circle cx="134.0" cy="80.8" r="1.1" fill="#fff"/><circle cx="142.5" cy="69.8" r="1.1" fill="#fff"/><circle cx="144.5" cy="79.8" r="1.1" fill="#fff"/><polygon points="135,93 148,93 150,97 134,97" fill="#1a3070"/><circle cx="149" cy="86.5" r="11.5" fill="#f5b800"/><circle cx="149" cy="86.5" r="9" fill="#fdf0cc"/><line x1="149" y1="86.5" x2="149" y2="79" stroke="#222" stroke-width="1"/><line x1="149" y1="86.5" x2="144" y2="86.5" stroke="#222" stroke-width="1"/><line x1="149" y1="86.5" x2="153.5" y2="91" stroke="#e04010" stroke-width="0.9"/><rect x="184" y="58" width="18" height="14" fill="#f2f2f2" stroke="#b0b0b0" stroke-width="0.6"/><rect x="188" y="61" width="10" height="0.8" fill="#bbb"/><rect x="188" y="64" width="10" height="0.8" fill="#bbb"/><rect x="172.5" y="69" width="40.5" height="23" rx="3" fill="#2e5ce0"/><rect x="172.5" y="69" width="40.5" height="5" rx="2" fill="#5a86f0"/><rect x="183" y="71" width="19.5" height="16" fill="url(#prg)"/><polygon points="181,88 205,88 206,97 180,97" fill="#dcdcdc" stroke="#a8a8a8" stroke-width="0.6"/><rect x="183" y="87" width="19" height="2" fill="#f09030"/><circle cx="245" cy="80.5" r="14.5" fill="none" stroke="url(#ringg)" stroke-width="9"/><rect x="237.5" y="58.5" width="11" height="17" rx="4" fill="#d83020" transform="rotate(-12 243 67)"/><rect x="240" y="61" width="4" height="11" rx="2" fill="#f07060" transform="rotate(-12 243 67)"/></svg>
<div class="a" style="left:8px;top:111px;width:9px;height:9px;border:1px solid #919191;border-radius:1px;background:linear-gradient(#fff,#ebebeb)"></div><div class="a" style="left:10px;top:115px;width:5px;height:1px;background:#3b56a8"></div>
<div class="a" style="left:27px;top:127px;width:9px;height:9px;border:1px solid #919191;border-radius:1px;background:linear-gradient(#fff,#ebebeb)"></div><div class="a" style="left:29px;top:131px;width:5px;height:1px;background:#3b56a8"></div>
<svg class="a" style="left:0;top:100px" width="80" height="60"><g fill="#7a7a7a"><rect x="18" y="15" width="1" height="1"/><rect x="20" y="15" width="1" height="1"/><rect x="22" y="15" width="1" height="1"/><rect x="31" y="23" width="1" height="1"/><rect x="31" y="25" width="1" height="1"/><rect x="37" y="31" width="1" height="1"/><rect x="39" y="31" width="1" height="1"/><rect x="41" y="31" width="1" height="1"/><rect x="50" y="39" width="1" height="1"/><rect x="50" y="41" width="1" height="1"/><rect x="50" y="43" width="1" height="1"/><rect x="50" y="45" width="1" height="1"/><rect x="50" y="47" width="1" height="1"/><rect x="52" y="47" width="1" height="1"/><rect x="54" y="47" width="1" height="1"/><rect x="56" y="47" width="1" height="1"/><rect x="58" y="47" width="1" height="1"/><rect x="60" y="47" width="1" height="1"/></g><polygon points="25.5,9.5 34,9.5 38,20 28,21" fill="#06124a"/><circle cx="28.0" cy="12.0" r="1.15" fill="#2a6ad8"/><circle cx="28.9" cy="15.5" r="1.15" fill="#2a6ad8"/><circle cx="29.8" cy="19.0" r="1.15" fill="#2a6ad8"/><circle cx="31.2" cy="12.0" r="1.15" fill="#2a6ad8"/><circle cx="32.099999999999994" cy="15.5" r="1.15" fill="#2a6ad8"/><circle cx="33.0" cy="19.0" r="1.15" fill="#2a6ad8"/><circle cx="34.4" cy="12.0" r="1.15" fill="#2a6ad8"/><circle cx="35.3" cy="15.5" r="1.15" fill="#2a6ad8"/><circle cx="36.199999999999996" cy="19.0" r="1.15" fill="#2a6ad8"/><rect x="28" y="21.5" width="9" height="0.8" fill="#999"/><polygon points="63.0,41.5 71.5,41.5 75.5,52 65.5,53" fill="#06124a"/><circle cx="65.5" cy="44.0" r="1.15" fill="#2a6ad8"/><circle cx="66.4" cy="47.5" r="1.15" fill="#2a6ad8"/><circle cx="67.3" cy="51.0" r="1.15" fill="#2a6ad8"/><circle cx="68.7" cy="44.0" r="1.15" fill="#2a6ad8"/><circle cx="69.60000000000001" cy="47.5" r="1.15" fill="#2a6ad8"/><circle cx="70.5" cy="51.0" r="1.15" fill="#2a6ad8"/><circle cx="71.9" cy="44.0" r="1.15" fill="#2a6ad8"/><circle cx="72.80000000000001" cy="47.5" r="1.15" fill="#2a6ad8"/><circle cx="73.7" cy="51.0" r="1.15" fill="#2a6ad8"/><rect x="65.5" y="53.5" width="9" height="0.8" fill="#999"/><rect x="43" y="24" width="14" height="14" rx="1" fill="#d8d8d8"/><rect x="43" y="24" width="14" height="2" fill="#b0b0b0"/><rect x="43" y="36" width="14" height="2" fill="#b0b0b0"/><path d="M47 28 L53 28 L51 31 L50.5 35 L49.5 35 L49 31 Z" fill="#3a7cc8"/></svg>
<div class="t" style="left:44.3px;top:108.84px;font-size:12px;transform:scaleX(.86);transform-origin:0 0">Station Explorer</div>
<div class="t" style="left:62.2px;top:124.84px;font-size:12px;transform:scaleX(.88);transform-origin:0 0">COM4</div>
<div class="t" style="left:82.3px;top:140.64px;font-size:12px;transform:scaleX(.88);transform-origin:0 0">EPSOLAR 3210A</div>
<svg class="a" style="left:0;top:1040px" width="1920" height="40"><path d="M16 12.5 L23 11.5 L23 19 L16 19 Z M24 11.3 L32 10 L32 19 L24 19 Z M16 20 L23 20 L23 27.5 L16 26.5 Z M24 20 L32 20 L32 29 L24 27.8 Z" fill="#fff"/><circle cx="68" cy="20" r="9.3" fill="none" stroke="#fff" stroke-width="2.2"/><rect x="368" y="10" width="6" height="11" rx="3" fill="none" stroke="#a0a0a0" stroke-width="1"/><path d="M365.5 17 Q365.5 24 371 24 Q376.5 24 376.5 17 M371 24 V28 M367 28.5 H375" fill="none" stroke="#a0a0a0" stroke-width="1"/><rect x="408" y="12" width="16" height="15" fill="none" stroke="#fff" stroke-width="1.6"/><path d="M405.5 14 V25 M426.5 14 V25" stroke="#fff" stroke-width="1.2"/><path d="M476 22 H462 Q463 28 470 28 Q474 28 476 26 V30 Q473 32 469 32 Q459 32 458 22 Q458 10 468 9 Q478 9 477 20 Z M462 19 H472 Q471 13 467 13 Q463 13 462 19Z" fill="#1a7fe0" fill-rule="evenodd"/><path d="M505 11 H514 L516 13 H527 V30 H505 Z" fill="#f5c84a"/><rect x="505" y="15" width="22" height="15" fill="#fbd86a"/><path d="M511 24 H521 V31 H518 V27 H514 V31 H511Z" fill="#2a9ae8"/><path d="M554 14 H575 V31 H554 Z" fill="#fff"/><path d="M559 14 Q559 8 564.5 8 Q570 8 570 14" fill="none" stroke="#fff" stroke-width="1.4"/><path d="M558 18 H563.5 V22.5 H558Z M565 18 H570.5 V22.5 H565Z M558 23.5 H563.5 V28 H558Z M565 23.5 H570.5 V28 H565Z" fill="#04060b"/><rect x="603" y="10" width="20" height="20" rx="2" fill="#5a9ed8"/><circle cx="613" cy="20" r="7" fill="#f57a1a"/><path d="M610.5 16 L617 20 L610.5 24Z" fill="#fff"/><path d="M651 8 L671 20 L651 32 Z" fill="#2a6ec8"/><circle cx="659" cy="20" r="6" fill="#9ac4f0"/><rect x="701" y="9" width="22" height="22" rx="1.5" fill="#f4f4f4"/><rect x="705.0" y="13.0" width="3.5" height="3.5" fill="#e84030"/><rect x="705.0" y="18.3" width="3.5" height="3.5" fill="#f0b020"/><rect x="705.0" y="23.6" width="3.5" height="3.5" fill="#30a040"/><rect x="710.3" y="13.0" width="3.5" height="3.5" fill="#e84030"/><rect x="710.3" y="18.3" width="3.5" height="3.5" fill="#2a80e0"/><rect x="710.3" y="23.6" width="3.5" height="3.5" fill="#f0b020"/><rect x="715.6" y="13.0" width="3.5" height="3.5" fill="#30a040"/><rect x="715.6" y="18.3" width="3.5" height="3.5" fill="#2a80e0"/><rect x="715.6" y="23.6" width="3.5" height="3.5" fill="#e84030"/><circle cx="761" cy="20" r="11" fill="#db4437"/><path d="M761 20 L770.5 25.5 A11 11 0 0 1 751.5 25.5 Z" fill="#0f9d58"/><path d="M761 20 L751.5 25.5 A11 11 0 0 1 761 9 L761 9 Z" fill="#db4437"/><path d="M761 20 L761 9 A11 11 0 0 1 770.5 25.5Z" fill="#f4c20d"/><circle cx="761" cy="20" r="5" fill="#fff"/><circle cx="761" cy="20" r="4" fill="#4285f4"/><ellipse cx="810" cy="21" rx="10" ry="9.5" fill="#3ab0f0"/><rect x="803" y="20" width="14" height="2.5" fill="#04060b"/><path d="M808 19 H817 Q816 15 812 15 Q808 15 808 19Z" fill="#04060b"/><path d="M800 30 Q796 26 808 16 Q818 8 822 10 Q825 13 818 20" fill="none" stroke="#f5c400" stroke-width="1.8"/><rect x="835" y="0" width="46" height="40" fill="#2b2e33"/><rect x="835" y="37" width="46" height="3" fill="#76b9ed"/><path d="M848 21 Q852 17 868 18" stroke="#2a7ae0" stroke-width="1.5" fill="none"/><rect x="851" y="19" width="15" height="2" fill="#2a7ae0" opacity="0.6"/><path d="M1651 24 L1657 18 L1663 24" stroke="#fff" stroke-width="1.2" fill="none"/><circle cx="1681" cy="20" r="8" fill="#f5a020"/><path d="M1678 23 A3.5 3.5 0 1 1 1684 23" stroke="#fff" stroke-width="1.6" fill="none"/><rect x="1697.5" y="13" width="15" height="14" fill="#fff"/><rect x="1697.5" y="26" width="15" height="1.5" fill="#aaa"/><rect x="1721" y="14" width="16" height="10" fill="none" stroke="#fff" stroke-width="1"/><path d="M1729 24 V28 M1724 28.5 H1734 M1722 15 V30" stroke="#fff" stroke-width="1"/><path d="M1746 17 H1749 L1753 13 V27 L1749 23 H1746Z" fill="none" stroke="#fff" stroke-width="1"/><path d="M1755.5 17 Q1757.5 20 1755.5 23 M1758 15 Q1761 20 1758 25 M1760.5 13 Q1764 20 1760.5 27" stroke="#fff" stroke-width="0.9" fill="none"/><path d="M1879 12 H1901 V27 H1886 L1882 31 V27 H1879Z" fill="#fff"/><path d="M1883 16 H1897 M1883 19 H1897 M1883 22 H1893" stroke="#04060b" stroke-width="1"/><circle cx="1894" cy="27" r="6.5" fill="#2a2a2a" stroke="#888" stroke-width="0.8"/><path d="M1892.5 24 L1894.5 23 V31" stroke="#fff" stroke-width="1.3" fill="none"/><rect x="1915" y="0" width="1" height="40" fill="#3a3a3a"/></svg>
<div class="t" style="left:84.5px;top:1053.30px;font-size:15px;color:#a8a8a8;letter-spacing:-0.2px">Frag mich etwas</div>
<div class="t" style="left:1772.5px;top:1053.44px;font-size:12px;color:#fff;transform:scaleX(.86);transform-origin:0 0">DEU</div>
<div class="t" style="left:1820px;top:1044.84px;font-size:12px;color:#fff;transform:scaleX(.9);transform-origin:0 0">23:58</div>
<div class="t" style="left:1806.5px;top:1062.84px;font-size:12px;color:#fff;transform:scaleX(.94);transform-origin:0 0">07.03.2017</div>

</body></html>
